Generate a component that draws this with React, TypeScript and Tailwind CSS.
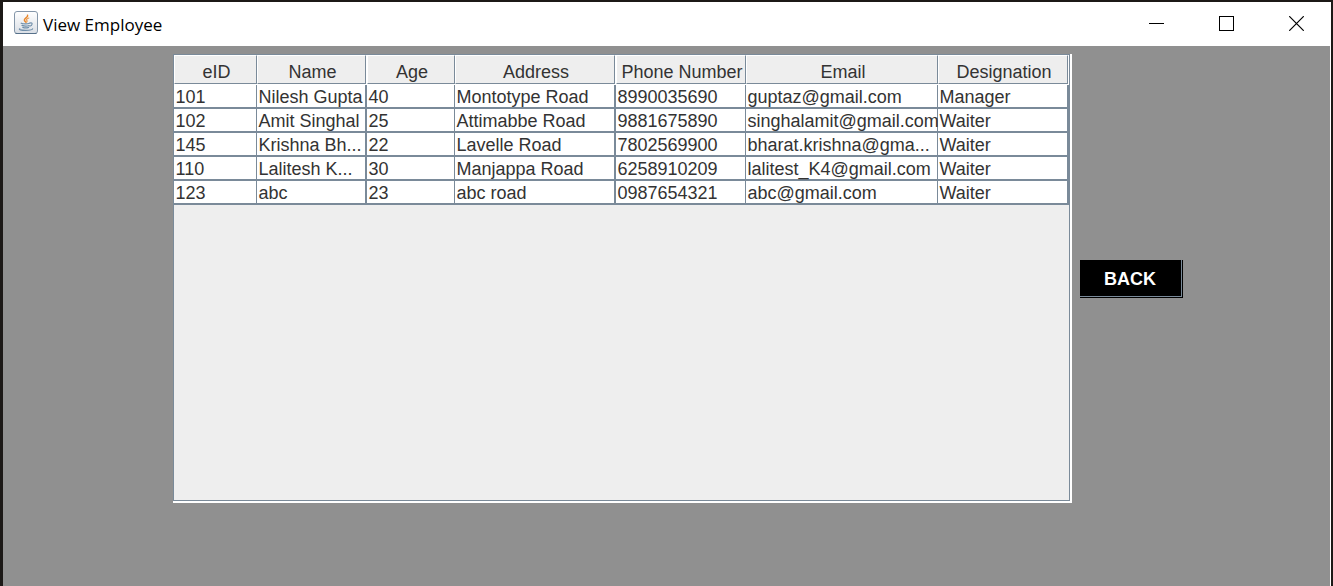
import React from "react";

type Column = { label: string; width: string; heavy?: boolean };

const columns: Column[] = [
  { label: "eID", width: "w-[83px]" },
  { label: "Name", width: "w-[110px]", heavy: true },
  { label: "Age", width: "w-[88px]" },
  { label: "Address", width: "w-[161px]", heavy: true },
  { label: "Phone Number", width: "w-[130px]" },
  { label: "Email", width: "w-[192px]" },
  { label: "Designation", width: "w-[131px]", heavy: true },
];

const rows: string[][] = [
  ["101", "Nilesh Gupta", "40", "Montotype Road", "8990035690", "guptaz@gmail.com", "Manager"],
  ["102", "Amit Singhal", "25", "Attimabbe Road", "9881675890", "singhalamit@gmail.com", "Waiter"],
  ["145", "Krishna Bh...", "22", "Lavelle Road", "7802569900", "bharat.krishna@gma...", "Waiter"],
  ["110", "Lalitesh K...", "30", "Manjappa Road", "6258910209", "lalitest_K4@gmail.com", "Waiter"],
  ["123", "abc", "23", "abc road", "0987654321", "abc@gmail.com", "Waiter"],
];

function JavaIcon() {
  return (
    <svg width="24" height="24" viewBox="0 0 24 24" fill="none" aria-hidden="true">
      <defs>
        <linearGradient id="tile" x1="0" y1="0" x2="0" y2="1">
          <stop offset="0" stopColor="#ffffff" />
          <stop offset="1" stopColor="#d9dee5" />
        </linearGradient>
      </defs>
      <rect x="0.5" y="0.5" width="23" height="22" rx="2.5" fill="url(#tile)" stroke="#8496a9" />
      <path d="M1.5 22.5h21" stroke="#56708a" />
      <path d="M13.6 4.2c.8 2.2-3.9 3-3.2 5.100.2.8 1 1.200 1.400 1.900" stroke="#e8872c" strokeWidth="1.5" strokeLinecap="round" />
      <path d="M14.800 7c-2 .8-2.900 1.500-1.900 2.500.5.6.2 1.100-.3 1.600" stroke="#ec9a4a" strokeWidth="1.2" strokeLinecap="round" />
      <path d="M7.2 12.2c2 .9 6.600.8 8.400 0M8 14.400c2 .8 5.500.8 7.200.1M8.800 16.400c1.700.6 4.300.6 5.800 0" stroke="#6f8ea9" strokeWidth="1.2" strokeLinecap="round" />
      <path d="M16 12c3-.7 2.700 2.400-.2 3.200" stroke="#6f8ea9" strokeWidth="1.100" strokeLinecap="round" />
      <path d="M5.800 17.800c-1.400.7.8 1.500 5.900 1.500 4.300 0 6.800-.7 6.900-1.500" stroke="#6f8ea9" strokeWidth="1.200" strokeLinecap="round" />
    </svg>
  );
}

function TitleBar() {
  return (
    <header className="flex h-11 shrink-0 items-center bg-white pl-[11px]">
      <div className="pb-[2px]">
        <JavaIcon />
      </div>
      <h1 className="ml-[5px] flex-1 pt-[2px] font-['Open_Sans',sans-serif] text-[17px] leading-6 text-black">View Employee</h1>
      <div className="flex h-full pb-[2px]">
        <button type="button" aria-label="Minimize" className="flex w-[70px] items-center justify-center">
          <svg width="15" height="15" viewBox="0 0 15 15" shapeRendering="crispEdges"><path d="M0 7.500h15" stroke="#000" /></svg>
        </button>
        <button type="button" aria-label="Maximize" className="flex w-[70px] items-center justify-center">
          <svg width="15" height="15" viewBox="0 0 15 15" fill="none" shapeRendering="crispEdges"><path d="M.5.5h14v14H.5z" stroke="#000" /></svg>
        </button>
        <button type="button" aria-label="Close" className="flex w-[70px] items-center justify-center">
          <svg width="15" height="15" viewBox="0 0 15 15"><path d="M.2.2l14.600 14.600M14.800.2L.2 14.800" stroke="#000" strokeWidth="1.200" /></svg>
        </button>
      </div>
    </header>
  );
}

function EmployeeTable() {
  return (
    <table className="w-full table-fixed border-separate border-spacing-0 text-left text-[18px] leading-5 text-[#333]">
      <colgroup>
        {columns.map((c) => (
          <col key={c.label} className={c.width} />
        ))}
      </colgroup>
      <thead>
        <tr>
          {columns.map((c) => (
            <th
              key={c.label}
              scope="col"
              className={`h-[30px] whitespace-nowrap border-b border-b-white bg-white p-0 text-center font-normal ${c.heavy ? "pr-px" : ""}`}
            >
              <div className="h-[29px] border border-b-[#7a8a99] border-l-white border-r-[#7a8a99] border-t-white bg-[#eee] pl-[3px] pt-[6px]">
                {c.label}
              </div>
            </th>
          ))}
        </tr>
      </thead>
      <tbody>
        {rows.map((row) => (
          <tr key={row[0]}>
            {row.map((value, i) => (
              <td
                key={columns[i].label}
                className={`h-6 whitespace-nowrap border-b-2 border-[#7a8a99] bg-white pb-0 pl-[2px] pr-0 pt-[2px] ${columns[i].heavy ? "border-r-2" : "border-r"}`}
              >
                {value}
              </td>
            ))}
          </tr>
        ))}
      </tbody>
    </table>
  );
}

export default function App() {
  return (
    <div className="flex min-h-screen flex-col border-l-[3px] border-r-2 border-t-2 border-[#1c1917] bg-[#909090] font-['Liberation_Sans',Arial,sans-serif]">
      <TitleBar />
      <main className="flex flex-1 items-start justify-center border-r border-white pl-[22px] pt-2">
        <section aria-label="Employees" className="w-full max-w-[899px] border-b-2 border-r-2 border-white">
          <div className="min-h-[447px] border border-[#7a8a99] bg-[#eee]">
            <EmployeeTable />
          </div>
        </section>
        <div className="ml-2 mt-[206px] shrink-0 border-b border-r border-black">
          <button
            type="button"
            className="h-[37px] w-[102px] border-b border-r border-[#7a8a99] bg-black pt-[2px] text-[18px] font-bold leading-[22px] text-white"
          >
            BACK
          </button>
        </div>
      </main>
    </div>
  );
}
